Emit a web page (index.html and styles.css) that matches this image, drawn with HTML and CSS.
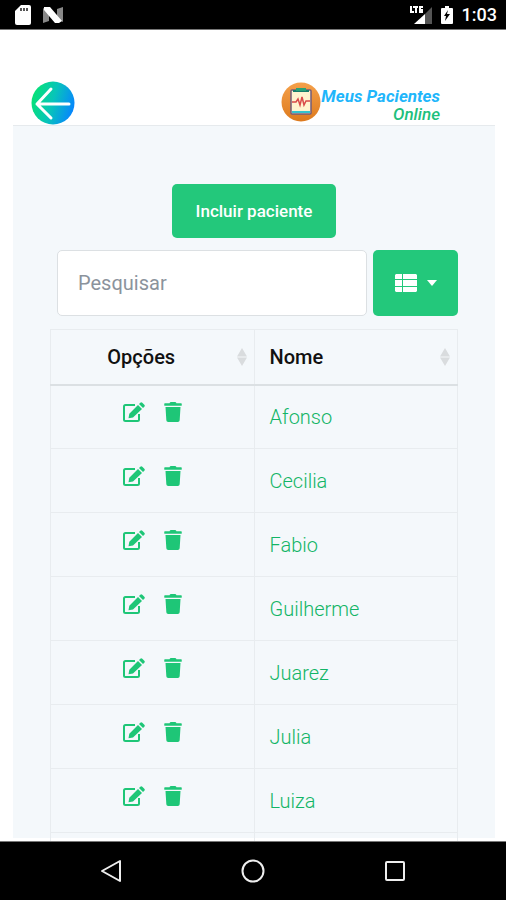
FILE: index.html
```html
<!DOCTYPE html>
<html lang="pt-BR">
<head>
<meta charset="utf-8">
<meta name="viewport" content="width=device-width, initial-scale=1">
<title>Meus Pacientes Online</title>
<link rel="stylesheet" href="styles.css">
</head>
<body>
<svg class="defs" aria-hidden="true">
  <symbol id="edit" viewBox="0 0 23 20"><path d="M13 3H3.500Q2 3 2 4.500v13Q2 19 3.500 19h12q1.500 0 1.500-1.500V12" fill="none" stroke="currentColor" stroke-width="2"/><path d="M16 3l4 4-9 8.500-4.500.8.800-4.600zM17 2l1.300-1.300q1-1 2 0l2 2q1 1 0 2L21 6z"/></symbol>
  <symbol id="trash" viewBox="0 0 448 512"><path d="M432 32H312l-9.400-18.700A24 24 0 0 0 281.100 0H166.800a23.700 23.700 0 0 0-21.400 13.300L136 32H16A16 16 0 0 0 0 48v32a16 16 0 0 0 16 16h416a16 16 0 0 0 16-16V48a16 16 0 0 0-16-16zM32 128l21.200 339a48 48 0 0 0 47.900 45h245.800a48 48 0 0 0 47.900-45L416 128z"/></symbol>
  <symbol id="sort" viewBox="0 0 10 18"><path d="M5 0l5 8.500H0zM5 18l5-8.500H0z"/></symbol>
</svg>
<div class="screen">
  <div class="status">
    <svg width="16" height="20" viewBox="0 0 16 20"><path fill="#fff" d="M6 0h8q2 0 2 2v16q0 2-2 2H2q-2 0-2-2V6z"/><path stroke="#555" stroke-width="2" d="M6 3v3M9 3v3M12 3v3"/></svg>
    <svg class="android" width="20" height="16" viewBox="0 0 20 16"><path fill="#888" d="M0 1l6 4v9l-6 2zM14 2l6-2v15l-6-3z"/><path fill="#fff" d="M1 0h6l12 14-3 2h-4L1 3z"/></svg>
    <svg class="signal" width="24" height="20" viewBox="0 0 24 20"><path fill="#555" d="M23 2v17h-7V9z"/><path fill="#fff" d="M16 9v10H5z"/><path fill="none" stroke="#fff" stroke-width="2" d="M2 1v6h3M4 2h5M7 2v6M14 2h-3v5h3M11 5h3"/></svg>
    <svg width="12" height="18" viewBox="0 0 12 18"><path fill="#fff" d="M4 0h4v2h3q1 0 1 1v14q0 1-1 1H1q-1 0-1-1V3q0-1 1-1h3z"/><path d="M7 4l-4 6h2l-1 5 5-7H6z"/></svg>
    <span>1:03</span>
  </div>
  <div class="app">
    <header class="topbar">
      <a class="back" href="#" aria-label="Voltar">
        <svg width="44" height="44" viewBox="0 0 44 44"><defs><linearGradient id="g" x1="0" y1=".3" x2="1" y2=".6"><stop offset="0" stop-color="#06e472"/><stop offset=".5" stop-color="#08c4ba"/><stop offset="1" stop-color="#0685ff"/></linearGradient></defs><circle cx="22" cy="22" r="21.500" fill="url(#g)"/><path d="M20 8L6 23l14 14M6 23h32" fill="none" stroke="#fff" stroke-width="3" stroke-linecap="round" stroke-linejoin="round"/></svg>
      </a>
      <div class="brand">
        <svg width="40" height="40" viewBox="0 0 40 40"><defs><linearGradient id="o" x1="0" y1="0" x2="0" y2="1"><stop offset="0" stop-color="#f5a04a"/><stop offset="1" stop-color="#dd7a1e"/></linearGradient></defs><circle cx="20" cy="20" r="19.500" fill="url(#o)"/><rect x="10" y="8" width="20" height="24" rx="1" fill="#fff3cf" stroke="#745c78" stroke-width="1.500"/><path d="M12 8h16v2H12z" fill="#187b6b"/><path d="M15 6h10v3H15z" fill="#28a276"/><path d="M11 29h18v2H11z" fill="#32c4cf"/><path d="M11 20h4l2-3 2 6 2-8 2 8 2-4h4" fill="none" stroke="#d94a4a" stroke-width="1.500"/></svg>
        <div class="brand-name"><span>Meus Pacientes</span><span class="online">Online</span></div>
      </div>
    </header>
    <main class="panel">
      <button class="btn add" type="button">Incluir paciente</button>
      <div class="tools">
        <input class="search" type="search" placeholder="Pesquisar" aria-label="Pesquisar">
        <button class="btn columns" type="button" aria-label="Colunas">
          <svg width="22" height="18" viewBox="0 0 22 18"><path fill="#fff" d="M1 0h6v5H0V1zM8 0h13l1 1v4H8zM0 6h7v6H0zM8 6h14v6H8zM0 13h7v5H1l-1-1zM8 13h14v4l-1 1H8z"/></svg>
          <svg width="10" height="6" viewBox="0 0 10 6"><path fill="#fff" d="M0 0h10L5 6z"/></svg>
        </button>
      </div>
      <table>
        <thead><tr>
          <th class="options" scope="col"><div class="head"><span>Opções</span><svg width="10" height="18"><use href="#sort"/></svg></div></th>
          <th scope="col"><div class="head"><span>Nome</span><svg width="10" height="18"><use href="#sort"/></svg></div></th>
        </tr></thead>
        <tbody id="rows"></tbody>
      </table>
    </main>
  </div>
  <nav class="nav">
    <button type="button" aria-label="Voltar"><svg width="24" height="24" viewBox="0 0 24 24"><path d="M21 2v20L3 12z"/></svg></button>
    <button type="button" aria-label="Início"><svg width="24" height="24" viewBox="0 0 24 24"><circle cx="12" cy="12" r="10.500"/></svg></button>
    <button type="button" aria-label="Recentes"><svg width="24" height="24" viewBox="0 0 24 24"><rect x="3" y="3" width="18" height="18" rx="1"/></svg></button>
  </nav>
</div>
<script src="script.js"></script>
</body>
</html>
```
FILE: styles.css
```css
* { box-sizing: border-box; }
body { margin: 0; background: #fff; font-family: Roboto, sans-serif; color: #111; }
button, input { font: inherit; }
svg { display: block; flex: none; }
.defs { position: absolute; width: 0; height: 0; }
.screen { display: flex; flex-direction: column; height: 100vh; }
.status { display: flex; align-items: center; height: 30px; flex: none; padding: 0 9px 0 15px; background: #000; border-bottom: 1px solid #777; color: #fff; font-size: 18px; font-weight: 500; }
.android { margin-left: 12px; }
.signal { margin: 0 8px 0 auto; }
.status span { margin-left: 9px; }
.app { flex: 1; min-height: 0; overflow: hidden; display: flex; flex-direction: column; padding: 51px 11px 3px 13px; }
.topbar { display: flex; align-items: flex-start; justify-content: space-between; flex: none; height: 44px; padding: 0 55px 0 18px; }
.brand { display: flex; padding-top: 1px; }
.brand-name { display: flex; flex-direction: column; padding-top: 5px; font-size: 17px; line-height: 18px; font-weight: 700; font-style: italic; color: #1fb6fb; }
.online { align-self: flex-end; font-weight: 500; color: #20bf7c; }
.panel { flex: 1; min-height: 0; padding: 58px 37px 0 37px; background: #f4f8fb; border-top: 1px solid #e6eaed; display: flex; flex-direction: column; }
.btn { border: 0; border-radius: 5px; background: #23c87b; color: #fff; }
.add { align-self: center; flex: none; height: 54px; padding: 0 24px; font-size: 17px; font-weight: 500; }
.tools { display: flex; flex: none; gap: 6px; margin: 12px 0 13px 7px; }
.search { flex: 1; min-width: 0; height: 66px; padding: 0 20px; border: 1px solid #dce0e3; border-radius: 5px; background: #fff; font-size: 20px; appearance: none; }
.search::placeholder { color: #8b939c; opacity: 1; }
.columns { display: flex; align-items: center; justify-content: center; gap: 10px; width: 85px; height: 66px; }
table { width: 100%; flex: none; border-collapse: collapse; table-layout: fixed; }
th, td { border: 1px solid #e8ecef; padding: 0 15px; text-align: left; }
th { height: 55px; padding-right: 7px; border-bottom: 2px solid #dbe0e3; font-size: 20px; font-weight: 500; }
.head { display: flex; align-items: center; justify-content: space-between; }
.head svg { fill: #d9dcde; }
.options { width: 50%; }
.options span { flex: 1; padding-right: 20px; text-align: center; }
td { height: 64px; font-size: 20px; font-weight: 300; }
td a { color: #12b566; text-decoration: none; }
.actions { display: flex; justify-content: center; gap: 19px; padding-bottom: 10px; }
.actions button { padding: 0; border: 0; background: none; color: #1ec677; }
.actions svg { height: 20px; fill: currentColor; }
.edit { width: 23px; }
.trash { width: 18px; }
.nav { display: flex; flex: none; justify-content: center; gap: 118px; height: 59px; border-top: 1px solid #777; background: #000; }
.nav button { padding: 0; border: 0; background: none; }
.nav svg { fill: none; stroke: #eee; stroke-width: 2; stroke-linejoin: round; }
```
FILE: script.js
```js
const names = ["Afonso", "Cecilia", "Fabio", "Guilherme", "Juarez", "Julia", "Luiza"];

const rows = names.map(name => `
  <tr>
    <td><div class="actions">
      <button type="button" aria-label="Editar ${name}"><svg class="edit"><use href="#edit"/></svg></button>
      <button type="button" aria-label="Excluir ${name}"><svg class="trash"><use href="#trash"/></svg></button>
    </div></td>
    <td><a href="#">${name}</a></td>
  </tr>`);

document.getElementById("rows").innerHTML = rows.join("") + "<tr><td></td><td></td></tr>";
```
